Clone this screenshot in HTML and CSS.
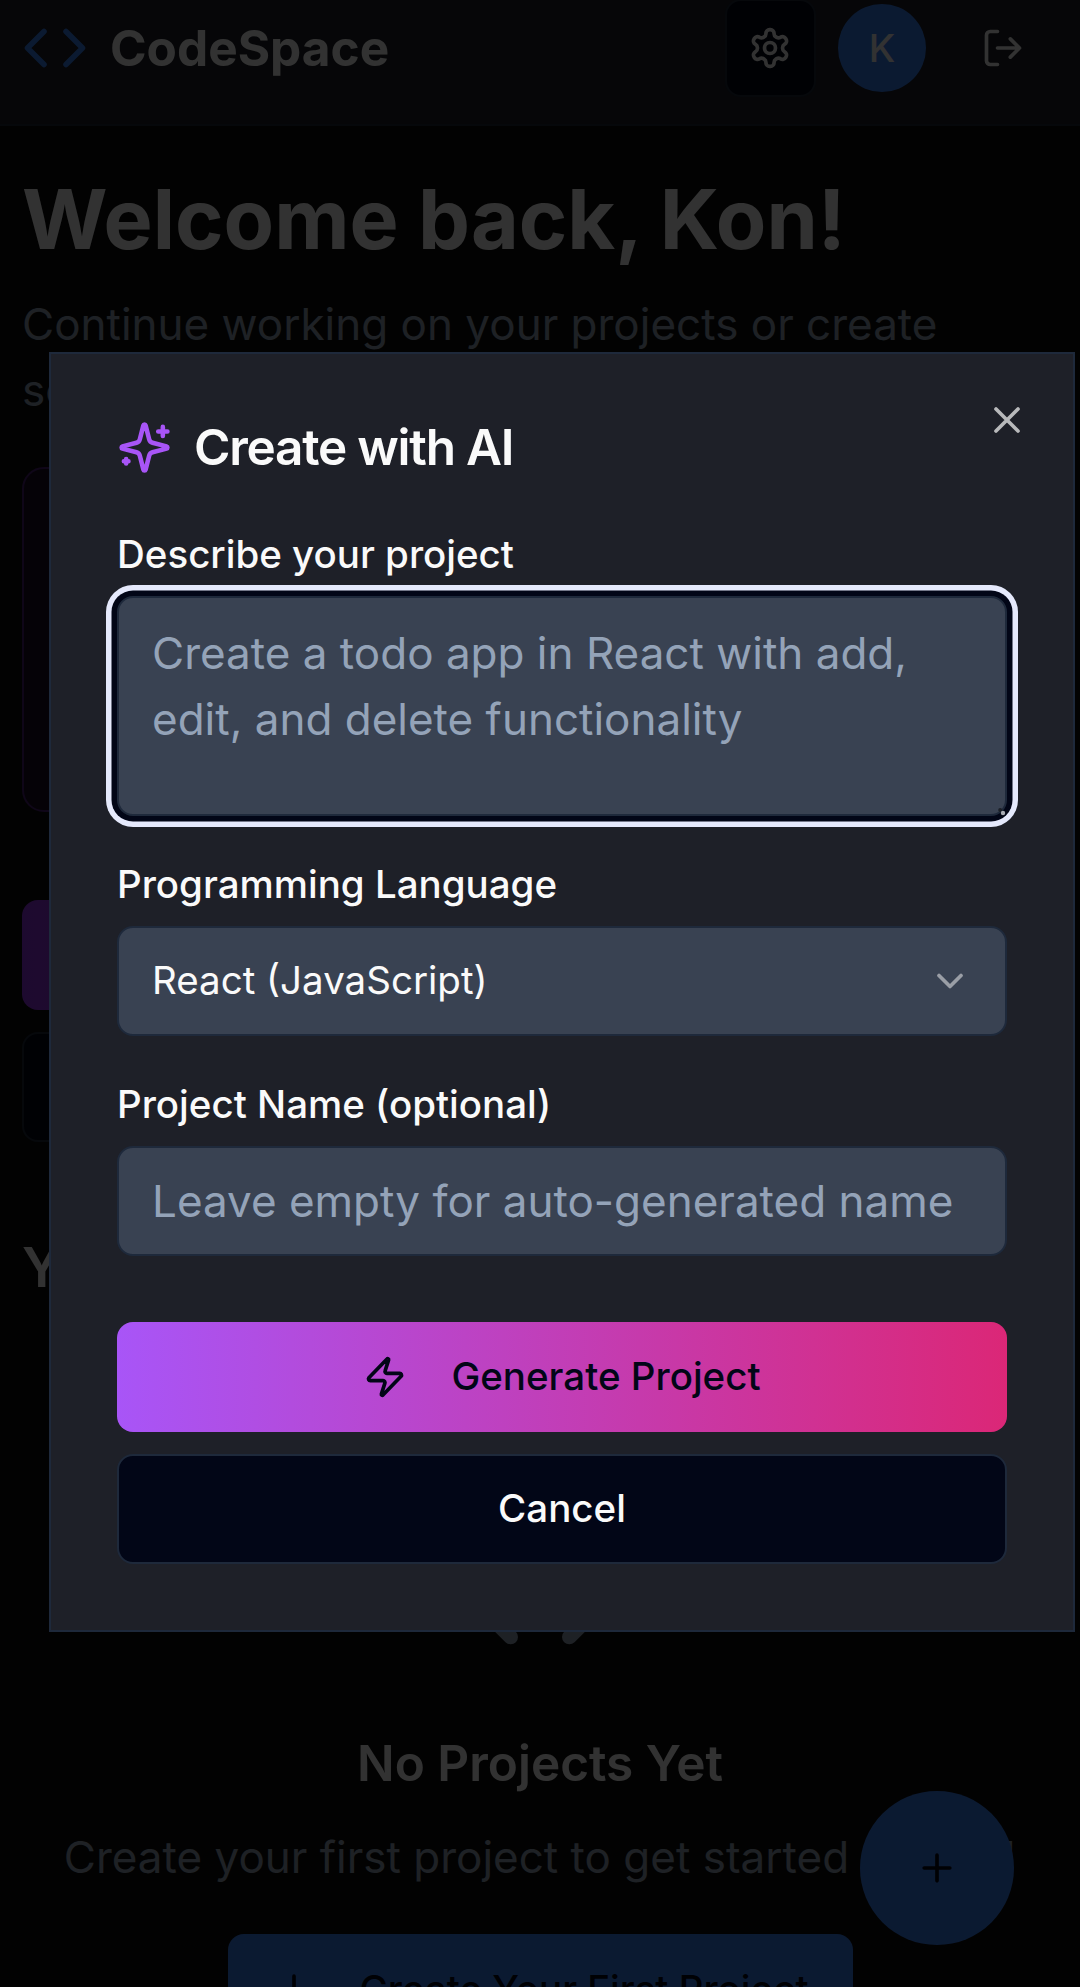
FILE: index.html
```html
<!DOCTYPE html>
<html lang="en">
<head>
<meta charset="utf-8">
<title>CodeSpace</title>
<link rel="stylesheet" href="styles.css">
</head>
<body>
<div class="page">
  <header class="topbar">
    <div class="brand">
      <svg class="icon icon-lg brand-icon" viewBox="0 0 24 24"><path d="m16 18 6-6-6-6M8 6l-6 6 6 6"/></svg>
      <span class="brand-name">CodeSpace</span>
    </div>
    <div class="topbar-actions">
      <button class="settings-btn" aria-label="Settings">
        <svg class="icon" viewBox="0 0 24 24"><path d="M12.22 2h-.44a2 2 0 0 0-2 2v.18a2 2 0 0 1-1 1.73l-.43.25a2 2 0 0 1-2 0l-.15-.08a2 2 0 0 0-2.73.73l-.22.38a2 2 0 0 0 .73 2.73l.15.1a2 2 0 0 1 1 1.72v.51a2 2 0 0 1-1 1.74l-.15.09a2 2 0 0 0-.73 2.73l.22.38a2 2 0 0 0 2.73.73l.15-.08a2 2 0 0 1 2 0l.43.25a2 2 0 0 1 1 1.73V20a2 2 0 0 0 2 2h.44a2 2 0 0 0 2-2v-.18a2 2 0 0 1 1-1.73l.43-.25a2 2 0 0 1 2 0l.15.08a2 2 0 0 0 2.73-.73l.22-.39a2 2 0 0 0-.73-2.73l-.15-.08a2 2 0 0 1-1-1.74v-.5a2 2 0 0 1 1-1.74l.15-.09a2 2 0 0 0 .73-2.73l-.22-.38a2 2 0 0 0-2.73-.73l-.15.08a2 2 0 0 1-2 0l-.43-.25a2 2 0 0 1-1-1.73V4a2 2 0 0 0-2-2z"/><circle cx="12" cy="12" r="3"/></svg>
      </button>
      <span class="avatar">K</span>
      <button class="logout-btn" aria-label="Log out">
        <svg class="icon" viewBox="0 0 24 24"><path d="M9 21H5a2 2 0 0 1-2-2V5a2 2 0 0 1 2-2h4M16 17l5-5-5-5M21 12H9"/></svg>
      </button>
    </div>
  </header>

  <main class="content">
    <h1 class="welcome">Welcome back, Kon!</h1>
    <p class="lead">Continue working on your projects or create something new.</p>
    <section class="ai-card"></section>
    <div class="actions">
      <div class="action action-ai"></div>
      <div class="action action-outline"></div>
    </div>
    <h2 class="section-title">Your Projects</h2>
    <section class="empty">
      <svg class="icon empty-icon" viewBox="0 0 24 24"><path d="m16 18 6-6-6-6M8 6l-6 6 6 6"/></svg>
      <h3 class="empty-title">No Projects Yet</h3>
      <p class="empty-text">Create your first project to get started coding!</p>
      <button class="btn btn-primary">
        <svg class="icon" viewBox="0 0 24 24"><path d="M5 12h14M12 5v14"/></svg>
        Create Your First Project
      </button>
    </section>
  </main>

  <button class="fab" aria-label="New project">
    <svg class="icon" viewBox="0 0 24 24"><path d="M5 12h14M12 5v14"/></svg>
  </button>
</div>

<div class="overlay"></div>

<div class="dialog" role="dialog" aria-labelledby="dialog-title">
  <button class="close" aria-label="Close">
    <svg class="icon" viewBox="0 0 24 24"><path d="M18 6 6 18M6 6l12 12"/></svg>
  </button>
  <h2 class="dialog-title" id="dialog-title">
    <svg class="icon icon-md" viewBox="0 0 24 24"><path d="M9.937 15.5A2 2 0 0 0 8.5 14.063l-6.135-1.582a.5.5 0 0 1 0-.962L8.5 9.936A2 2 0 0 0 9.937 8.5l1.582-6.135a.5.5 0 0 1 .963 0L14.063 8.5A2 2 0 0 0 15.5 9.937l6.135 1.581a.5.5 0 0 1 0 .964L15.5 14.063a2 2 0 0 0-1.437 1.437l-1.582 6.135a.5.5 0 0 1-.963 0zM20 3v4M22 5h-4M4 17v2M5 18H3"/></svg>
    <span class="dialog-title-text">Create with AI</span>
  </h2>
  <div class="fields">
    <div class="field">
      <label class="label" for="prompt">Describe your project</label>
      <div class="prompt-box">
        <textarea class="control prompt" id="prompt" placeholder="Create a todo app in React with add, edit, and delete functionality"></textarea>
        <svg class="grip" viewBox="0 0 8 8"><circle class="grip-dark" cx="2.2" cy="2" r="2"/><circle class="grip-light" cx="5" cy="5" r="2.2"/></svg>
      </div>
    </div>
    <div class="field">
      <span class="label">Programming Language</span>
      <button class="control select">
        <span class="select-value">React (JavaScript)</span>
        <svg class="icon" viewBox="0 0 24 24"><path d="m6 9 6 6 6-6"/></svg>
      </button>
    </div>
    <div class="field">
      <label class="label" for="name">Project Name (optional)</label>
      <input class="control" id="name" placeholder="Leave empty for auto-generated name">
    </div>
  </div>
  <div class="dialog-actions">
    <button class="btn btn-generate">
      <svg class="icon" viewBox="0 0 24 24"><path d="M4 14a1 1 0 0 1-.78-1.63l9.9-10.2a.5.5 0 0 1 .86.46l-1.92 6.02A1 1 0 0 0 13 10h7a1 1 0 0 1 .78 1.63l-9.9 10.2a.5.5 0 0 1-.86-.46l1.92-6.02A1 1 0 0 0 11 14z"/></svg>
      <span class="btn-text">Generate Project</span>
    </button>
    <button class="btn btn-cancel"><span class="btn-text">Cancel</span></button>
  </div>
</div>
</body>
</html>
```
FILE: styles.css
```css
:root {
  --bg: #0d0d0d;
  --surface: #1e2028;
  --control: #394252;
  --ink: #020617;
  --border: #1e293b;
  --text: #fafafa;
  --muted: #94a3b8;
  --blue: #3b82f6;
}

* { box-sizing: border-box; }

body {
  margin: 0;
  height: 1987px;
  overflow: hidden;
  position: relative;
  background: var(--bg);
  color: var(--text);
  font: 400 44px/66px Inter, "Liberation Sans", sans-serif;
  font-optical-sizing: none;
  font-variation-settings: "opsz" 14;
}

h1, h2, h3, p { margin: 0; }

button, input, textarea {
  margin: 0;
  padding: 0;
  border: 0;
  background: none;
  color: inherit;
  font: inherit;
  font-variation-settings: inherit;
}

.icon {
  flex: none;
  display: block;
  width: 44px;
  height: 44px;
  fill: none;
  stroke: currentColor;
  stroke-width: 2;
  stroke-linecap: round;
  stroke-linejoin: round;
}
.icon-md { width: 55px; height: 55px; color: #a855f7; }
.icon-lg { width: 66px; height: 66px; }

.page { height: 1987px; overflow: hidden; }

/* Top bar */
.topbar {
  display: flex;
  align-items: flex-start;
  justify-content: space-between;
  height: 126px;
  padding: 0 22px;
  background: var(--surface);
  border-bottom: 2px solid var(--border);
}
.brand, .topbar-actions { display: flex; align-items: center; height: 96px; }
.brand { gap: 22px; }
.brand-icon { color: var(--blue); }
.brand-name { font-size: 49.5px; font-weight: 700; }
.settings-btn {
  display: grid;
  place-items: center;
  width: 91px;
  height: 98px;
  margin-right: 22.5px;
  border: 2px solid var(--border);
  border-radius: 16px;
  background: var(--ink);
}
.avatar {
  display: grid;
  place-items: center;
  width: 88px;
  height: 88px;
  margin-right: 22px;
  border-radius: 50%;
  background: var(--blue);
  font-size: 38.5px;
  font-weight: 500;
}
.logout-btn { padding: 0 33px; }

/* Dashboard */
.content { display: flex; flex-direction: column; padding: 44px 22px; }
.welcome { font-size: 82.5px; line-height: 99px; font-weight: 700; margin-bottom: 22px; }
.lead { color: var(--muted); margin-bottom: 44px; }
.ai-card {
  height: 345px;
  border: 2px solid #4d1f78;
  border-radius: 22px;
  background: #190e24;
}
.actions { display: flex; flex-direction: column; gap: 22px; margin: 88px 0 87px; }
.action { height: 110px; border-radius: 16px; }
.action-ai { background: linear-gradient(90deg, #9333ea, #db2777); }
.action-outline { border: 2px solid var(--border); background: var(--ink); }
.section-title { font-size: 55px; line-height: 77px; font-weight: 600; }
.empty {
  display: flex;
  flex-direction: column;
  align-items: center;
  padding-top: 199px;
}
.empty-icon { width: 176px; height: 176px; color: var(--muted); margin-bottom: 44px; }
.empty-title { font-size: 49.5px; line-height: 77px; font-weight: 600; margin-bottom: 22px; }
.empty-text { color: var(--muted); margin-bottom: 44px; white-space: nowrap; }

.btn {
  display: flex;
  align-items: center;
  justify-content: center;
  gap: 44px;
  height: 110px;
  padding: 0 44px;
  border-radius: 16px;
  font-size: 38.5px;
  line-height: 55px;
  font-weight: 500;
}
.btn-text { padding-bottom: 2px; }
.btn-primary { background: var(--blue); color: var(--ink); }

.fab {
  position: absolute;
  right: 66px;
  bottom: 42px;
  display: grid;
  place-items: center;
  width: 154px;
  height: 154px;
  border-radius: 50%;
  background: var(--blue);
  color: var(--ink);
}

.overlay { position: absolute; inset: 0; background: rgba(0, 0, 0, .8); }

/* Dialog */
.dialog {
  position: absolute;
  left: 49px;
  top: 352px;
  width: 1026px;
  height: 1280px;
  padding: 66px;
  border: 2px solid var(--border);
  background: var(--surface);
}
.close { position: absolute; top: 44px; right: 44px; opacity: .7; }
.dialog-title {
  display: flex;
  align-items: center;
  gap: 22px;
  height: 55px;
  font-size: 49.5px;
  font-weight: 600;
  letter-spacing: -.025em;
}
.dialog-title-text { padding-bottom: 2px; }
.fields { display: flex; flex-direction: column; gap: 33px; margin-top: 44px; }
.field { display: flex; flex-direction: column; gap: 11px; }
.label { height: 66px; padding-top: 2px; font-size: 38.5px; font-weight: 500; }
.control {
  display: block;
  width: 100%;
  height: 110px;
  padding: 0 33px;
  border: 2px solid var(--border);
  border-radius: 16px;
  background: var(--control);
}
.control::placeholder { color: var(--muted); opacity: 1; }
.prompt-box { position: relative; }
.prompt {
  height: 220px;
  padding: 22px 33px;
  resize: none;
  overflow: hidden;
  box-shadow: 0 0 0 5.5px var(--ink), 0 0 0 11px #e5e9fc;
}
.grip { position: absolute; right: 1px; bottom: 0; width: 8px; height: 8px; }
.grip-dark { fill: #1b1f27; }
.grip-light { fill: #a9adb5; }
.select {
  display: flex;
  align-items: center;
  justify-content: space-between;
  font-size: 38.5px;
}
.select-value { padding-bottom: 2px; }
.select .icon { opacity: .5; }
.dialog-actions { display: flex; flex-direction: column; gap: 22px; margin-top: 66px; }
.btn-generate { background: linear-gradient(90deg, #a855f7, #db2777); color: var(--ink); }
.btn-cancel { border: 2px solid var(--border); background: var(--ink); }
```
